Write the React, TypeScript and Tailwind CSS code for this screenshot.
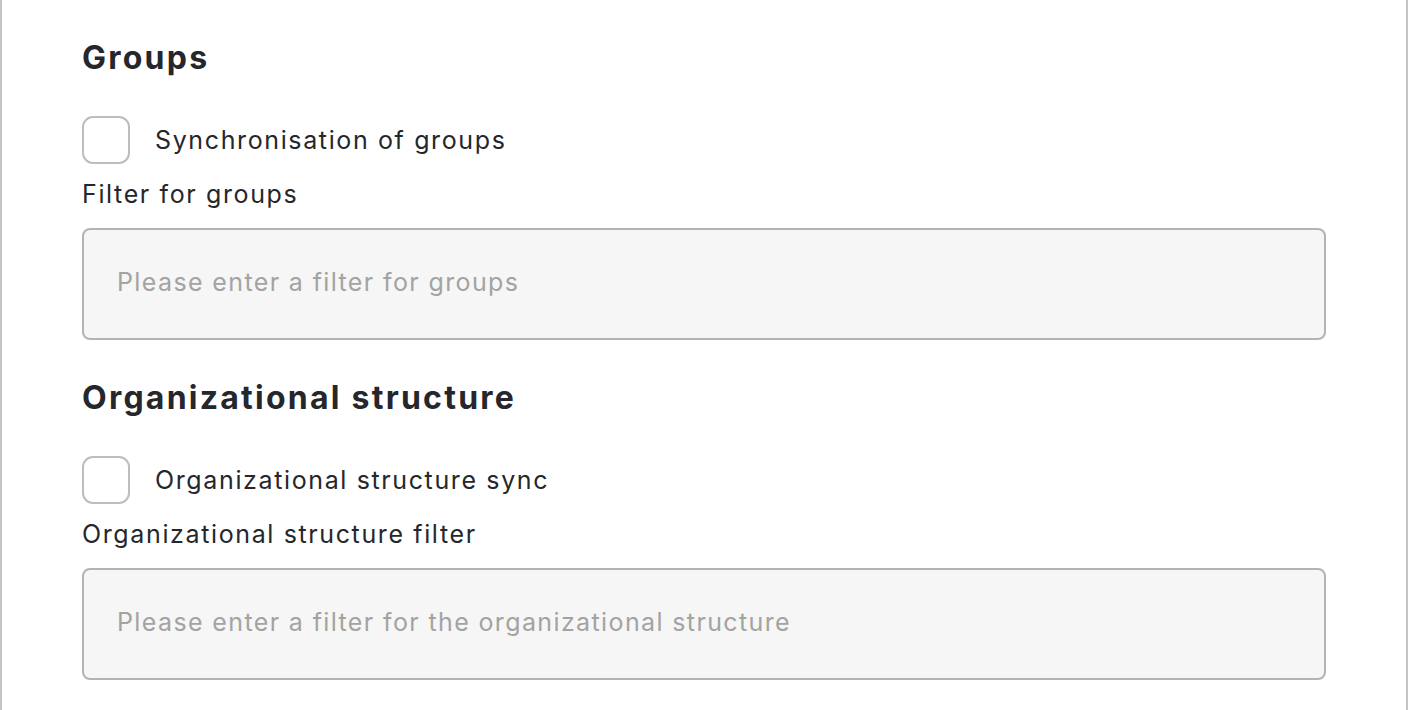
export default function App() {
  return (
    <div
      className="min-h-[710px] w-full bg-white border-x-2 border-[#c4c4c4] px-[80px] pt-[40px] text-[#25272c]"
      style={{ fontFamily: "Inter, 'Noto Sans', sans-serif" }}
    >
      <Section
        title="Groups"
        checkLabel="Synchronisation of groups"
        filterLabel="Filter for groups"
        placeholder="Please enter a filter for groups"
      />
      <div className="h-[40px]" />
      <Section
        title="Organizational structure"
        checkLabel="Organizational structure sync"
        filterLabel="Organizational structure filter"
        placeholder="Please enter a filter for the organizational structure"
      />
    </div>
  );
}

function Section({
  title,
  checkLabel,
  filterLabel,
  placeholder,
}: {
  title: string;
  checkLabel: string;
  filterLabel: string;
  placeholder: string;
}) {
  return (
    <section>
      <h2 className="text-[32px] leading-[36px] font-bold tracking-[0.07em]">{title}</h2>
      <label className="mt-[40px] flex items-center gap-[25px]">
        <input
          type="checkbox"
          className="h-[48px] w-[48px] appearance-none rounded-[11px] border-2 border-[#bdbdbd] bg-white"
        />
        <span className="text-[25px] leading-[32px] tracking-[0.065em]">{checkLabel}</span>
      </label>
      <div className="mt-[14px] text-[25px] leading-[32px] tracking-[0.065em]">{filterLabel}</div>
      <input
        type="text"
        placeholder={placeholder}
        className="mt-[18px] block h-[112px] w-full rounded-[8px] border-2 border-[#b3b3b3] bg-[#f6f6f6] px-[33px] pb-[4px] text-[25px] tracking-[0.055em] outline-none placeholder:text-[#a3a3a3]"
      />
    </section>
  );
}
